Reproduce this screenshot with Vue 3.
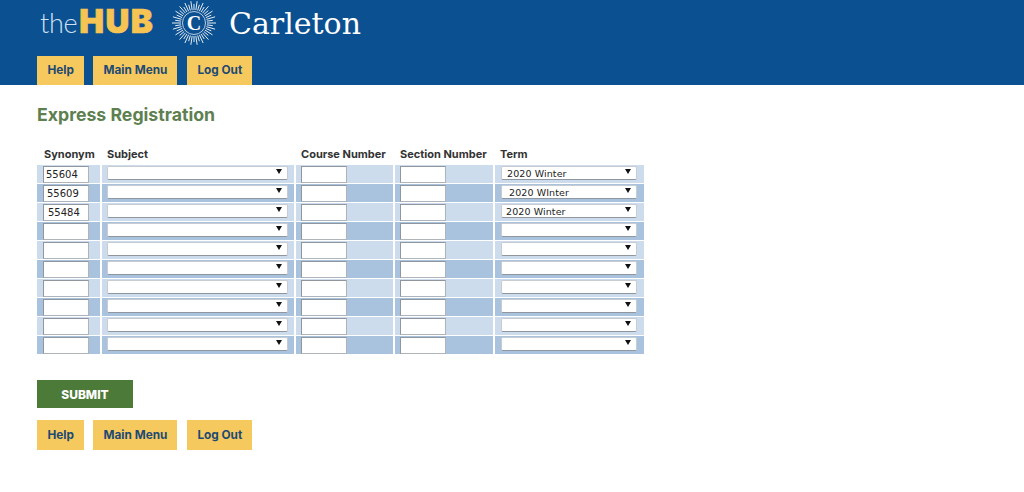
<script setup>
const navLinks = ["Help", "Main Menu", "Log Out"];
const rows = [
  { synonym: "55604", synPad: 2, term: "2020 Winter", termPad: 5 },
  { synonym: "55609", synPad: 3, term: "2020 WInter", termPad: 7 },
  { synonym: "55484", synPad: 4, term: "2020 Winter", termPad: 4 },
  {}, {}, {}, {}, {}, {}, {},
];
// sunburst rays round the crest
const rays = Array.from({ length: 44 }, (_, i) => {
  const a = (i / 44) * Math.PI * 2;
  const outer = i % 2 ? 19 : 22;
  return {
    x1: 22 + Math.cos(a) * 13,
    y1: 22 + Math.sin(a) * 13,
    x2: 22 + Math.cos(a) * outer,
    y2: 22 + Math.sin(a) * outer,
  };
});
</script>

<template>
  <div class="page">
    <header class="header">
      <div class="logo-row">
        <div class="hub"><span class="the">the</span><span class="bold">HUB</span></div>
        <svg class="crest" width="44" height="44" viewBox="0 0 44 44">
          <line v-for="(r, i) in rays" :key="i" :x1="r.x1" :y1="r.y1" :x2="r.x2" :y2="r.y2" stroke="#e4ecf5" stroke-width="1" />
          <circle cx="22" cy="22" r="11.5" fill="none" stroke="#e4ecf5" stroke-width="0.8" />
          <text x="22" y="28.5" text-anchor="middle" class="crest-c">C</text>
        </svg>
        <div class="carleton">Carleton</div>
      </div>
      <nav class="nav">
        <a v-for="l in navLinks" :key="l" class="btn tab">{{ l }}</a>
      </nav>
    </header>

    <main class="main">
      <h1>Express Registration</h1>
      <table class="reg">
        <thead>
          <tr>
            <th>Synonym</th>
            <th>Subject</th>
            <th>Course Number</th>
            <th>Section Number</th>
            <th>Term</th>
          </tr>
        </thead>
        <tbody>
          <tr v-for="(row, i) in rows" :key="i" :class="i % 2 ? 'even' : 'odd'">
            <td><input class="box syn" :value="row.synonym" :style="{ paddingLeft: (row.synPad || 2) + 'px' }" /></td>
            <td>
              <div class="sel subject"><select><option></option></select><i class="arrow"></i></div>
            </td>
            <td><input class="box" /></td>
            <td><input class="box" /></td>
            <td class="term-cell">
              <div class="sel term">
                <select :style="{ paddingLeft: (row.termPad || 4) + 'px' }">
                  <option>{{ row.term }}</option>
                </select>
                <i class="arrow"></i>
              </div>
            </td>
          </tr>
        </tbody>
      </table>

      <button class="submit">SUBMIT</button>
      <div class="bottom-nav">
        <a v-for="l in navLinks" :key="l" class="btn">{{ l }}</a>
      </div>
    </main>
  </div>
</template>

<style scoped>
.page {
  width: 1024px;
  height: 492px;
  background: #fff;
  overflow: hidden;
  font-family: "Inter", sans-serif;
}
.header {
  background: #0b5091;
  height: 85px;
  padding-left: 37px;
  box-sizing: border-box;
}
.logo-row {
  display: flex;
  align-items: center;
  height: 56px;
  padding-left: 3px;
}
.hub {
  width: 132px;
  height: 48px;
  margin-top: -14px;
  font-family: "Lato", sans-serif;
  font-size: 27px;
  line-height: 48px;
  white-space: nowrap;
  color: #cfe0f0;
}
.the {
  font-weight: 300;
  letter-spacing: -0.3px;
}
.bold {
  margin-left: 2px;
  font-family: "Inter", sans-serif;
  font-weight: 900;
  color: #f6c453;
  font-size: 33px;
  letter-spacing: 1.4px;
  -webkit-text-stroke: 0.7px #f6c453;
}
.crest {
  flex: none;
  margin-top: -10px;
}
.crest-c {
  font-family: "Liberation Serif", serif;
  font-size: 20px;
  font-weight: 700;
  fill: #fff;
}
.carleton {
  margin-left: 13px;
  margin-top: -10px;
  font-family: "DejaVu Serif", serif;
  font-size: 30px;
  color: #fff;
}
.nav,
.bottom-nav {
  display: flex;
  gap: 9px;
}
.btn {
  display: block;
  background: #f6c95f;
  color: #1d4a73;
  font-family: "Inter", sans-serif;
  font-weight: 700;
  font-size: 11.8px;
  line-height: 30px;
  height: 30px;
  padding: 0 10px;
}
.btn:first-child {
  padding: 0 10.5px;
}
.btn:last-child {
  margin-left: 1px;
}
.tab {
  height: 29px;
  line-height: 29px;
}
.main {
  padding: 19px 37px 0;
}
h1 {
  margin: 0 0 21px;
  color: #5e7f50;
  font-size: 17.7px;
  line-height: 22px;
  font-weight: 700;
}
.reg {
  border-collapse: separate;
  border-spacing: 0;
  table-layout: fixed;
  width: 607px;
}
.reg th {
  text-align: left;
  vertical-align: top;
  font-size: 11px;
  line-height: 14px;
  height: 18px;
  padding: 0 0 0 7px;
  color: #333;
  font-weight: 700;
  white-space: nowrap;
}
.reg th:nth-child(1) { width: 56px; }
.reg th:nth-child(2) { width: 187px; }
.reg th:nth-child(3) { width: 92px; }
.reg th:nth-child(4) { width: 93px; }
.reg td {
  padding: 0 0 0 6px;
  height: 18px;
  border-bottom: 1px solid #fff;
  border-left: 2px solid #fff;
  vertical-align: top;
}
.reg td:first-child {
  border-left: 0;
}
.reg td + td {
  padding-left: 5px;
}
.reg td.term-cell {
  padding-left: 6px;
}
tr.odd td { background: #cddcec; }
tr.even td { background: #a9c3de; }
tr:last-child td { border-bottom: 0; }
.box {
  display: block;
  box-sizing: border-box;
  width: 46px;
  height: 17px;
  margin-top: 1px;
  background: #fff;
  border: 1px solid #aeb4ba;
  border-top-color: #8f969d;
  border-left-color: #8f969d;
  font-family: "DejaVu Sans", sans-serif;
  font-size: 10px;
  color: #222;
  outline: none;
  padding: 0 2px;
}
.sel {
  position: relative;
  height: 14px;
  margin-top: 1px;
}
.sel.subject { width: 181px; }
.sel.term { width: 136px; }
.sel select {
  display: block;
  appearance: none;
  width: 100%;
  height: 14px;
  box-sizing: border-box;
  background: #fff;
  border: 1px solid #c8ccd0;
  border-bottom-color: #8f969d;
  border-radius: 2px;
  font-family: "DejaVu Sans", sans-serif;
  font-size: 9.5px;
  letter-spacing: 0.1px;
  color: #222;
  padding: 0 0 0 4px;
  outline: none;
}
.arrow {
  position: absolute;
  right: 6px;
  top: 3px;
  border-left: 3px solid transparent;
  border-right: 3px solid transparent;
  border-top: 5px solid #111;
}
.submit {
  display: block;
  margin: 26px 0 12px;
  width: 96px;
  height: 28px;
  border: 0;
  background: #4c7a39;
  color: #fff;
  font-family: "Inter", sans-serif;
  font-weight: 800;
  font-size: 12px;
  padding: 0;
}
</style>
